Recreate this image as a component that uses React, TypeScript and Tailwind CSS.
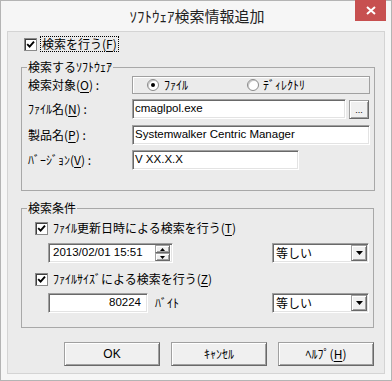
import React from "react";

const JP = "font-['Noto_Sans_CJK_JP',sans-serif]";
const LAT = "font-['Liberation_Sans',sans-serif] text-[11.5px]";

const sunken =
  "bg-white border border-t-[#a0a0a0] border-l-[#a0a0a0] border-r-white border-b-white shadow-[inset_1px_1px_0_#696969,inset_-1px_-1px_0_#e3e3e3]";
const raised =
  "bg-[#f0f0f0] border border-[#a0a0a0] border-r-[#696969] border-b-[#696969] shadow-[inset_1px_1px_0_#ffffff,inset_-1px_-1px_0_#a0a0a0]";

function Check() {
  return (
    <span className="w-[13px] h-[13px] shrink-0 bg-white border border-[#8a8a8a] shadow-[inset_1px_1px_0_#404040] flex items-center justify-center">
      <svg width="9" height="9" viewBox="0 0 9 9">
        <path d="M1.2 4.2 L3.6 6.6 L8 1.6" stroke="#000" strokeWidth="1.9" fill="none" />
      </svg>
    </span>
  );
}

function Radio({ on }: { on?: boolean }) {
  return (
    <span className="w-[12px] h-[12px] shrink-0 rounded-full bg-white border border-[#8a8a8a] shadow-[inset_1px_1px_0_#c8c8c8] flex items-center justify-center">
      {on && <span className="w-[4px] h-[4px] rounded-full bg-black" />}
    </span>
  );
}

function Acc({ pre, k, post = "" }: { pre: string; k: string; post?: string }) {
  return (
    <span className="whitespace-nowrap">
      {pre}(<span className="underline underline-offset-[2px]">{k}</span>){post}
    </span>
  );
}

function DownTri() {
  return (
    <svg width="7" height="4" viewBox="0 0 7 4">
      <path d="M0 0 H7 L3.5 4 Z" fill="#000" />
    </svg>
  );
}

function Combo() {
  return (
    <div className={`${sunken} w-[97px] h-[20px] flex items-center justify-between pl-[3px] pr-[1px]`}>
      <span className={`${JP} text-[12px] leading-[14px]`}>等しい</span>
      <span className={`${raised} w-[16px] h-[16px] flex items-center justify-center`}>
        <DownTri />
      </span>
    </div>
  );
}

export default function App() {
  return (
    <div className={`w-[392px] h-[381px] bg-[#f6f6f6] border border-[#b4b4b4] px-[6px] pb-[6px] flex flex-col ${JP} text-black`}>
      {/* title bar */}
      <div className="relative h-[30px] shrink-0 flex items-center justify-center">
        <span className="text-[15px] leading-[18px] text-[#222] pl-[2px]">ｿﾌﾄｳｪｱ検索情報追加</span>
        <div className="absolute -top-[1px] -right-[1px] w-[31px] h-[21px] bg-[#c75050] flex items-center justify-center">
          <svg width="10" height="9" viewBox="0 0 10 9">
            <path d="M1 1 L9 8 M9 1 L1 8" stroke="#fff" strokeWidth="2" />
          </svg>
        </div>
      </div>

      {/* client */}
      <div className="flex-1 bg-[#ebebeb] border border-[#d4d4d4] pl-[13px] pr-[10px] flex flex-col text-[12px]">
        {/* enable check */}
        <div className="mt-[4px] h-[16px] flex items-center pl-[3px]">
          <Check />
          <span className="ml-[4px] px-[1px] leading-[14px] outline outline-1 outline-dotted outline-black">
            <Acc pre="検索を行う" k="F" />
          </span>
        </div>

        {/* group 1 */}
        <fieldset className="mt-[8px] h-[131px] border border-[#a8a8a8] pl-[6px] pr-[4px]">
          <legend className="-ml-[1px] px-[1px] leading-[14px]">検索するｿﾌﾄｳｪｱ</legend>
          <div className="mt-[2px] flex items-center h-[18px]">
            <span className="w-[104px] leading-[14px]">
              <Acc pre="検索対象" k="O" post=" :" />
            </span>
            <div className="w-[238px] h-[18px] border border-[#a0a0a0] shadow-[inset_1px_1px_0_#ffffff] flex items-center">
              <div className="ml-[14px] w-[100px] flex items-center">
                <Radio on />
                <span className="ml-[5px] leading-[14px]">ﾌｧｲﾙ</span>
              </div>
              <div className="flex items-center">
                <Radio />
                <span className="ml-[4px] leading-[14px]">ﾃﾞｨﾚｸﾄﾘ</span>
              </div>
            </div>
          </div>
          <div className="mt-[5px] flex items-center h-[20px]">
            <span className="w-[104px] leading-[14px]">
              <Acc pre="ﾌｧｲﾙ名" k="N" post=" :" />
            </span>
            <div className={`${sunken} w-[214px] h-[20px] flex items-center pl-[2px] ${LAT}`}>cmaglpol.exe</div>
            <div className={`${raised} ml-[3px] w-[20px] h-[19px] flex items-end justify-center pb-[3px] font-['Liberation_Sans',sans-serif] text-[9px] leading-[9px]`}>...</div>
          </div>
          <div className="mt-[6px] flex items-center h-[20px]">
            <span className="w-[104px] leading-[14px]">
              <Acc pre="製品名" k="P" post=" :" />
            </span>
            <div className={`${sunken} w-[238px] h-[20px] flex items-center pl-[2px] ${LAT}`}>Systemwalker Centric Manager</div>
          </div>
          <div className="mt-[5px] flex items-center h-[20px]">
            <span className="w-[104px] leading-[14px]">
              <Acc pre="ﾊﾞｰｼﾞｮﾝ" k="V" post=" :" />
            </span>
            <div className={`${sunken} w-[167px] h-[20px] flex items-center pl-[2px] ${LAT}`}>V XX.X.X</div>
          </div>
        </fieldset>

        {/* group 2 */}
        <fieldset className="mt-[10px] h-[127px] border border-[#a8a8a8] pl-[6px] pr-[4px]">
          <legend className="-ml-[1px] px-[1px] leading-[14px]">検索条件</legend>
          <div className="mt-[5px] h-[16px] flex items-center pl-[7px]">
            <Check />
            <span className="ml-[5px] leading-[14px]">
              <Acc pre="ﾌｧｲﾙ更新日時による検索を行う" k="T" />
            </span>
          </div>
          <div className="mt-[7px] h-[20px] flex items-center justify-between">
            <div className={`${sunken} ml-[20px] w-[125px] h-[20px] flex items-center justify-between pl-[4px] pr-[2px] ${LAT}`}>
              <span>2013/02/01 15:51</span>
              <div className="flex flex-col">
                <span className={`${raised} w-[15px] h-[8px] flex items-center justify-center`}>
                  <svg width="5" height="3" viewBox="0 0 5 3"><path d="M0 3 H5 L2.5 0 Z" fill="#000" /></svg>
                </span>
                <span className={`${raised} w-[15px] h-[8px] flex items-center justify-center`}>
                  <svg width="5" height="3" viewBox="0 0 5 3"><path d="M0 0 H5 L2.5 3 Z" fill="#000" /></svg>
                </span>
              </div>
            </div>
            <Combo />
          </div>
          <div className="mt-[8px] h-[16px] flex items-center pl-[7px]">
            <Check />
            <span className="ml-[5px] leading-[14px]">
              <Acc pre="ﾌｧｲﾙｻｲｽﾞによる検索を行う" k="Z" />
            </span>
          </div>
          <div className="mt-[6px] h-[20px] flex items-center justify-between">
            <div className="flex items-center">
              <div className={`${sunken} ml-[20px] w-[100px] h-[20px] flex items-center justify-end pr-[6px] ${LAT}`}>80224</div>
              <span className="ml-[7px] leading-[14px]">ﾊﾞｲﾄ</span>
            </div>
            <Combo />
          </div>
        </fieldset>

        {/* buttons */}
        <div className="mt-[14px] flex justify-end gap-[11px]">
          <button className={`${raised} border-[#696969] w-[96px] h-[24px] flex items-center justify-center font-['Liberation_Sans',sans-serif] text-[12px]`}>OK</button>
          <button className={`${raised} w-[96px] h-[24px] flex items-center justify-center text-[12px]`}>ｷｬﾝｾﾙ</button>
          <button className={`${raised} w-[96px] h-[24px] flex items-center justify-center text-[12px]`}>
            <Acc pre="ﾍﾙﾌﾟ" k="H" />
          </button>
        </div>
      </div>
    </div>
  );
}
